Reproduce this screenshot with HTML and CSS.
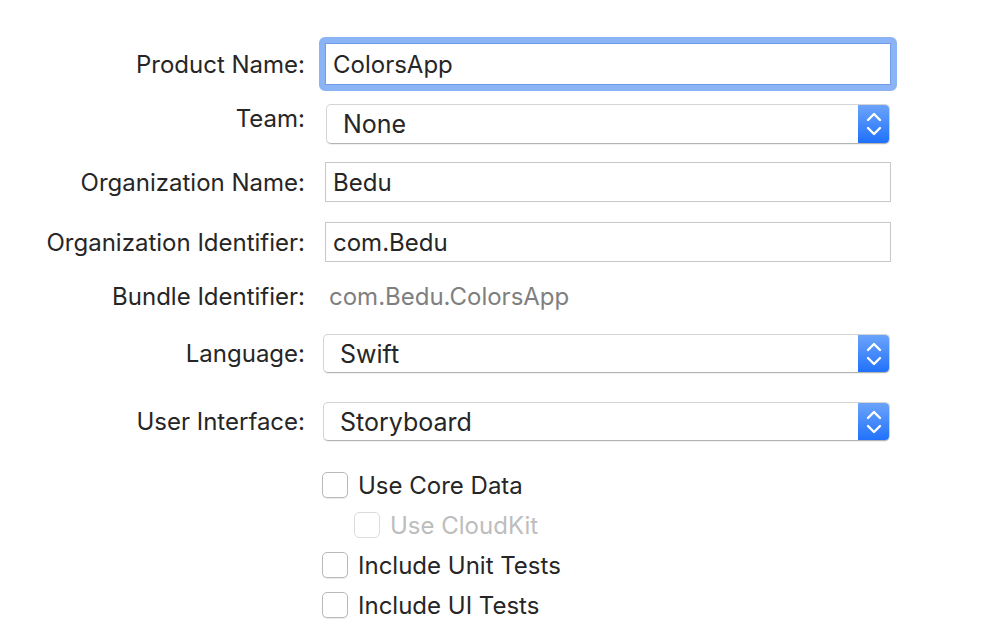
FILE: index.html
```html
<!DOCTYPE html>
<html>
<head>
<meta charset="utf-8">
<link rel="stylesheet" href="styles.css">
</head>
<body>
<div class="form">
  <div class="row r-product">
    <div class="label">Product Name:</div>
    <div class="field focus"><div class="input">ColorsApp</div></div>
  </div>
  <div class="row r-team">
    <div class="label lift">Team:</div>
    <div class="popup"><span class="ptext pt-none">None</span><span class="stepper"><svg width="18" height="26" viewBox="0 0 18 26"><path d="M3 9 L9 3 L15 9 M3 17 L9 23 L15 17" fill="none" stroke="#fff" stroke-width="2.4" stroke-linecap="round" stroke-linejoin="round"/></svg></span></div>
  </div>
  <div class="row r-org">
    <div class="label">Organization Name:</div>
    <div class="field"><div class="input">Bedu</div></div>
  </div>
  <div class="row r-orgid">
    <div class="label">Organization Identifier:</div>
    <div class="field"><div class="input">com.Bedu</div></div>
  </div>
  <div class="row r-bundle">
    <div class="label">Bundle Identifier:</div>
    <div class="static">com.Bedu.ColorsApp</div>
  </div>
  <div class="row r-lang">
    <div class="label">Language:</div>
    <div class="popup wide"><span class="ptext">Swift</span><span class="stepper"><svg width="18" height="26" viewBox="0 0 18 26"><path d="M3 9 L9 3 L15 9 M3 17 L9 23 L15 17" fill="none" stroke="#fff" stroke-width="2.4" stroke-linecap="round" stroke-linejoin="round"/></svg></span></div>
  </div>
  <div class="row r-ui">
    <div class="label">User Interface:</div>
    <div class="popup wide"><span class="ptext">Storyboard</span><span class="stepper"><svg width="18" height="26" viewBox="0 0 18 26"><path d="M3 9 L9 3 L15 9 M3 17 L9 23 L15 17" fill="none" stroke="#fff" stroke-width="2.4" stroke-linecap="round" stroke-linejoin="round"/></svg></span></div>
  </div>
  <div class="checks">
    <div class="check"><span class="box"></span><span>Use Core Data</span></div>
    <div class="check sub disabled"><span class="box"></span><span>Use CloudKit</span></div>
    <div class="check"><span class="box"></span><span>Include Unit Tests</span></div>
    <div class="check"><span class="box"></span><span>Include UI Tests</span></div>
  </div>
</div>
</body>
</html>
```
FILE: styles.css
```css
* { box-sizing: border-box; }
html, body { margin: 0; padding: 0; background: #fff; }
body {
  font-family: Inter, "Helvetica Neue", "Liberation Sans", sans-serif;
  font-size: 24px;
  color: #262626;
  width: 990px;
  height: 640px;
  overflow: hidden;
}
.form {
  padding-top: 37px;
  display: flex;
  flex-direction: column;
}
.row {
  display: flex;
  align-items: center;
}
.label {
  width: 305px;
  text-align: right;
  flex: none;
}
.label.lift { padding-bottom: 12px; }
.r-product { height: 54px; }
.r-team { height: 40px; margin-top: 13px; }
.r-org { height: 40px; margin-top: 18px; }
.r-orgid { height: 40px; margin-top: 20px; }
.r-bundle { height: 30px; margin-top: 19px; }
.r-lang { height: 39px; margin-top: 23px; }
.r-ui { height: 39px; margin-top: 29px; }

.field {
  margin-left: 20px;
  width: 566px;
  height: 40px;
  border: 1px solid #c8c8c8;
  background: #fff;
  display: flex;
  align-items: center;
}
.field.focus {
  margin-left: 14px;
  width: 578px;
  height: 54px;
  border: 6px solid #8ab4f5;
  border-radius: 6px;
  padding: 0;
}
.field.focus .input {
  width: 100%;
  height: 100%;
  border: 1px solid #6f9ee6;
  display: flex;
  align-items: center;
  padding-left: 7px;
}
.input { padding-left: 7px; }
.static {
  margin-left: 24px;
  color: #7f7f7f;
}
.popup {
  margin-left: 21px;
  width: 564px;
  height: 40px;
  border: 1px solid #d4d4d4;
  border-bottom-color: #b4b4b4;
  border-radius: 5px;
  display: flex;
  align-items: center;
  justify-content: space-between;
  background: #fff;
  box-shadow: 0 1px 0 rgba(0,0,0,0.06);
  overflow: hidden;
}
.popup.wide { margin-left: 18px; width: 567px; height: 39px; }
.ptext { padding-left: 16px; font-size: 25px; }
.stepper {
  width: 32px;
  height: 40px;
  margin-top: -1px;
  margin-bottom: -1px;
  margin-right: -1px;
  background: linear-gradient(#6ea5fa, #1d6ffb);
  border-radius: 0 5px 5px 0;
  display: flex;
  align-items: center;
  justify-content: center;
}
.checks {
  margin-top: 24px;
  margin-left: 322px;
  display: flex;
  flex-direction: column;
}
.check {
  height: 40px;
  display: flex;
  align-items: center;
  gap: 10px;
  font-size: 24px;
}
.box {
  width: 26px;
  height: 26px;
  border: 1px solid #b9b9b9;
  border-radius: 5px;
  background: #fff;
  box-shadow: 0 1px 1px rgba(0,0,0,0.08);
  flex: none;
}
.check.sub { margin-left: 32px; }
.check.disabled { color: #bdbdbd; }
.check.disabled .box { border-color: #dcdcdc; box-shadow: none; }
```
